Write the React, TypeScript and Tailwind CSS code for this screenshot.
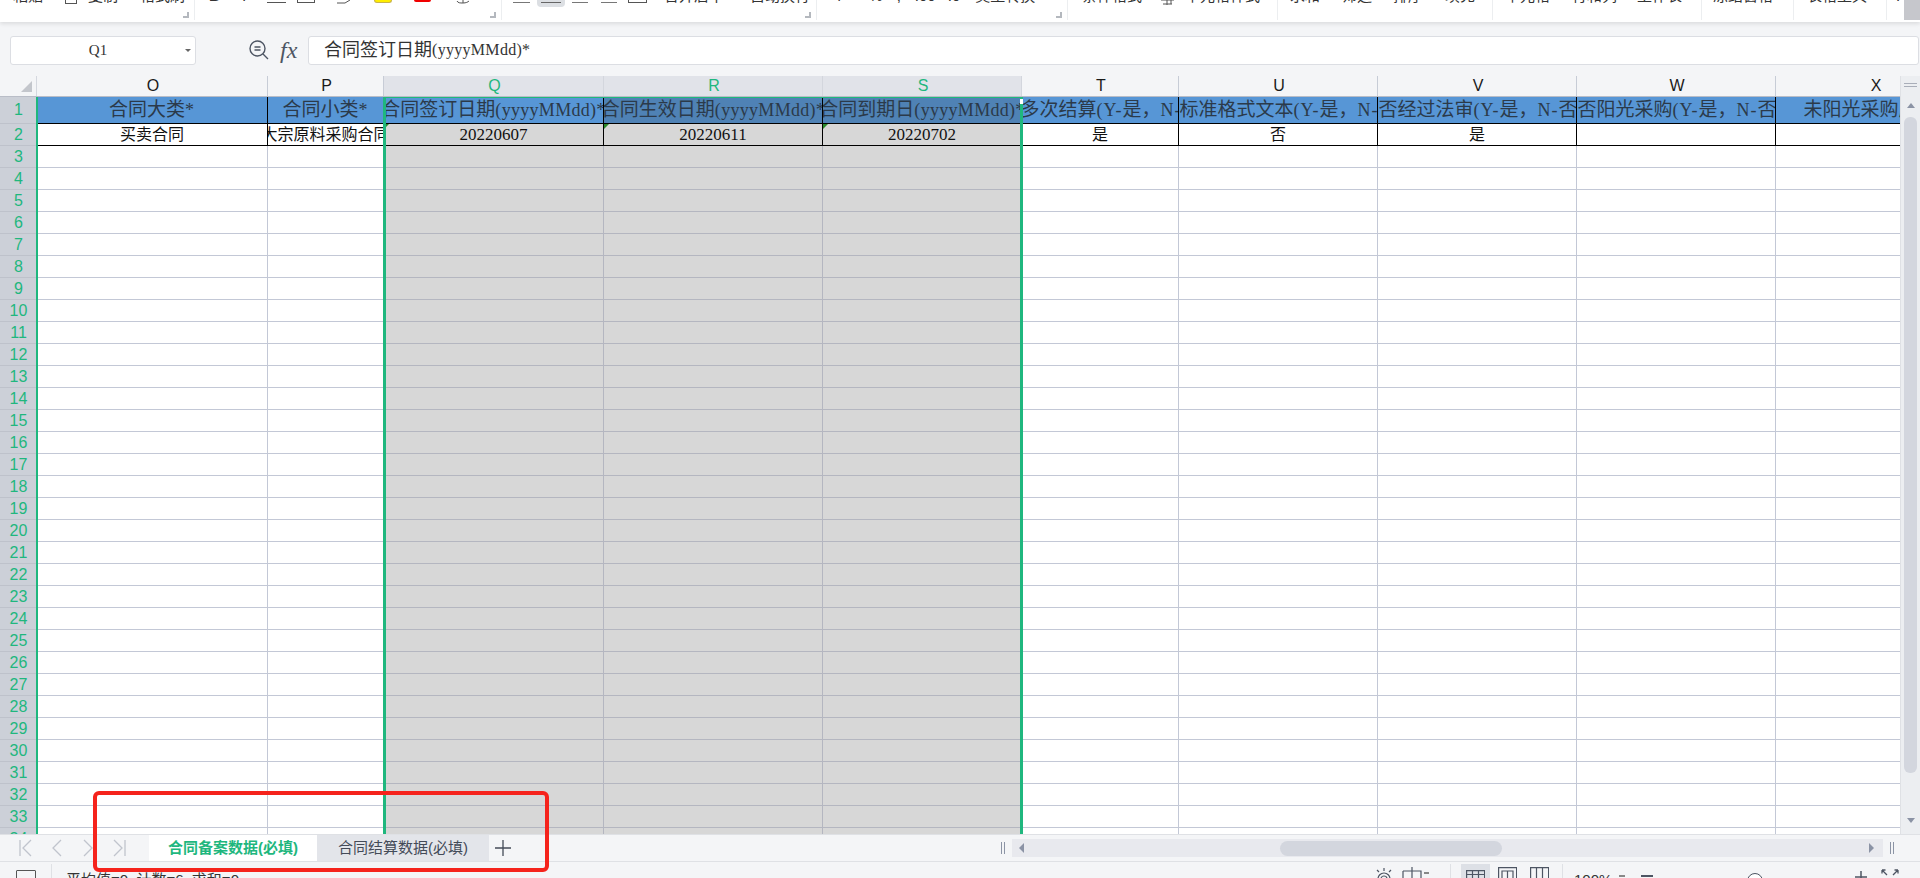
const latinFont = "font-['Liberation_Serif',serif]";

// simsun style text: ascii runs get a thin serif, close to the half width latin of the reference
const MixedText = ({ text, latinClass }: { text: string; latinClass: string }) => (
  <>
    {text.split(/([\x20-\x7e]+)/).map((part, i) =>
      /^[\x20-\x7e]+$/.test(part) ? (
        <span key={i} className={`${latinFont} ${latinClass}`}>
          {part}
        </span>
      ) : (
        <span key={i}>{part}</span>
      ),
    )}
  </>
);

const columns = [
  { id: "O", width: "w-[231px]", header: "合同大类*", value: "买卖合同" },
  { id: "P", width: "w-[116px]", header: "合同小类*", value: "大宗原料采购合同" },
  { id: "Q", width: "w-[220px]", header: "合同签订日期(yyyyMMdd)*", value: "20220607", selected: true },
  { id: "R", width: "w-[219px]", header: "合同生效日期(yyyyMMdd)*", value: "20220611", selected: true },
  { id: "S", width: "w-[199px]", header: "合同到期日(yyyyMMdd)*", value: "20220702", selected: true },
  { id: "T", width: "w-[157px]", header: "是否多次结算(Y-是，N-否)*", value: "是" },
  { id: "U", width: "w-[199px]", header: "是否标准格式文本(Y-是，N-否)*", value: "否" },
  { id: "V", width: "w-[199px]", header: "是否经过法审(Y-是，N-否)*", value: "是" },
  { id: "W", width: "w-[199px]", header: "是否阳光采购(Y-是，N-否)*", value: "" },
  { id: "X", width: "w-[199px]", header: "未阳光采购原因*", value: "" },
];

const rowNumbers = Array.from({ length: 34 }, (_, i) => i + 1);

const Launcher = () => (
  <span className="absolute right-[5px] top-[12px] w-[6px] h-[6px] border-r-2 border-b-2 border-[#b4b8be]" />
);

const Label = ({ text, className }: { text: string; className: string }) => (
  <span className={`-mt-[14px] h-[20px] leading-[20px] text-[15px] text-[#333] whitespace-nowrap ${className}`}>
    {text}
  </span>
);

const Ribbon = () => (
  <div className="relative z-10 flex h-[22px] shrink-0 overflow-hidden bg-white shadow-[0_2px_4px_rgba(0,0,0,0.1)]">
    <div className="relative flex items-start w-[195px] h-[20px] border-r border-[#eceef0]">
      <Label text="粘贴" className="ml-[13px]" />
      <span className="ml-[22px] w-[12px] h-[4px] border-x border-b border-[#555]" />
      <Label text="复制" className="ml-[11px]" />
      <Label text="格式刷" className="ml-[22px]" />
      <Launcher />
    </div>
    <div className="relative flex items-start w-[307px] h-[20px] border-r border-[#eceef0]">
      <Label text="B" className="ml-[14px] font-bold" />
      <Label text="I" className="ml-[23px] italic" />
      <span className="ml-[20px] mt-[2px] w-[19px] h-[1px] bg-[#555]" />
      <span className="ml-[11px] w-[18px] h-[3px] border-x border-b border-[#555]" />
      <svg className="ml-[21px]" width="15" height="4" viewBox="0 0 15 4">
        <path d="M1 3h8l5-3" fill="none" stroke="#555" />
      </svg>
      <span className="ml-[23px] w-[18px] h-[3px] rounded-b-sm bg-[#ffee00] border-x border-b border-[#c9b44a]" />
      <span className="ml-[22px] w-[17px] h-[2px] rounded-b-sm bg-[#f00000]" />
      <svg className="ml-[25px]" width="15" height="4" viewBox="0 0 15 4">
        <path d="M1 1c1 2 3 2 6 2s5-1 6-2M7 0v3" fill="none" stroke="#555" />
      </svg>
      <Launcher />
    </div>
    <div className="relative flex items-start w-[315px] h-[20px] border-r border-[#eceef0]">
      <span className="ml-[11px] mt-[2px] w-[17px] h-[1px] bg-[#777]" />
      <span className="flex justify-center ml-[7px] w-[28px] h-[7px] rounded-b-sm bg-[#dcdfe3]">
        <span className="mt-[2px] w-[20px] h-[1px] bg-[#666]" />
      </span>
      <span className="ml-[7px] mt-[2px] w-[16px] h-[1px] bg-[#777]" />
      <span className="ml-[13px] mt-[2px] w-[16px] h-[1px] bg-[#777]" />
      <span className="ml-[11px] w-[19px] h-[3px] border-x border-b border-[#555]" />
      <Label text="合并居中" className="ml-[17px]" />
      <Label text="自动换行" className="ml-[26px]" />
      <Launcher />
    </div>
    <div className="relative flex items-start w-[251px] h-[20px] border-r border-[#eceef0]">
      <Label text="¥" className="ml-[18px]" />
      <Label text="%" className="ml-[26px]" />
      <Label text="," className="ml-[14px]" />
      <Label text=".00" className="ml-[14px]" />
      <Label text=".0" className="ml-[12px]" />
      <Label text="类型转换" className="ml-[15px]" />
      <Launcher />
    </div>
    <div className="flex items-start w-[210px] h-[20px] border-r border-[#eceef0]">
      <Label text="条件格式" className="ml-[14px]" />
      <svg className="ml-[18px]" width="15" height="5" viewBox="0 0 15 5">
        <path d="M1 0h13M3 4h9M7 0v5M11 0v4" fill="none" stroke="#555" />
      </svg>
      <Label text="单元格样式" className="ml-[10px]" />
    </div>
    <div className="flex items-start w-[215px] h-[20px] border-r border-[#eceef0]">
      <Label text="求和" className="ml-[12px]" />
      <Label text="筛选" className="ml-[22px]" />
      <Label text="排序" className="ml-[21px]" />
      <Label text="填充" className="ml-[22px]" />
    </div>
    <div className="flex items-start w-[209px] h-[20px] border-r border-[#eceef0]">
      <Label text="单元格" className="ml-[12px]" />
      <Label text="行和列" className="ml-[22px]" />
      <Label text="工作表" className="ml-[20px]" />
    </div>
    <div className="flex items-start w-[92px] h-[20px] border-r border-[#eceef0]">
      <Label text="冻结窗格" className="ml-[11px]" />
    </div>
    <div className="flex items-start w-[93px] h-[20px] border-r border-[#eceef0]">
      <Label text="表格工具" className="ml-[13px]" />
    </div>
    <div className="flex items-start flex-1 h-[20px]">
      <Label text="!" className="ml-[9px]" />
      <span className="ml-auto w-[16px] h-[20px] bg-[#c6c7cc]" />
    </div>
  </div>
);

const FormulaBar = () => (
  <div className="flex items-center h-[54px] shrink-0 pt-[2px] pl-[10px] pr-px bg-[#f4f5f7]">
    <div className="flex items-center w-[186px] h-[29px] pr-[4px] rounded-[3px] border border-[#dcdee3] bg-white">
      <span className={`flex-1 text-center text-[15px] text-[#333] ${latinFont}`}>Q1</span>
      <span className="w-0 h-0 border-x-[3px] border-t-[3px] border-x-transparent border-t-[#666]" />
    </div>
    <svg className="ml-[52px]" width="22" height="22" viewBox="0 0 22 22" fill="none" stroke="#4d5563" strokeWidth="1.4">
      <circle cx="9.5" cy="9.5" r="7.5" />
      <path d="M15 15l5 5M6.5 8h6M6.5 11h6" />
    </svg>
    <span className="ml-[10px] w-[28px] font-['Liberation_Serif',serif] italic text-[24px] leading-none text-[#4d5563]">fx</span>
    <div className="flex items-center flex-1 h-[29px] pl-[15px] rounded-[3px] border border-[#dcdee3] bg-white text-[18px] text-[#333]">
      <MixedText text="合同签订日期(yyyyMMdd)*" latinClass="text-[16px] tracking-[0.3px]" />
    </div>
  </div>
);

const ColumnHeaders = () => (
  <div className="flex h-[21px] shrink-0 border-b border-[#b9bdc7] bg-[#f4f5f7]">
    <div className="flex shrink-0 items-end justify-end w-[37px] pr-[4px] pb-[4px] border-r border-[#d5d8df]">
      <span className="w-0 h-0 border-l-[11px] border-b-[11px] border-l-transparent border-b-[#c3c6cc]" />
    </div>
    {columns.map((col) => (
      <div
        key={col.id}
        className={`flex shrink-0 items-center justify-center pl-[2px] border-r text-[16px] ${col.width} ${
          col.selected ? "bg-[#e1e3e9] border-[#d3d6dd] text-[#1fb77e]" : "border-[#c7ccd6] text-[#1a1a1a]"
        }`}
      >
        {col.id}
      </div>
    ))}
  </div>
);

const HeaderCell = ({ col }: { col: (typeof columns)[number] }) => (
  <div
    className={`flex shrink-0 items-center justify-center overflow-hidden border-r border-b border-black text-[19px] text-[#2b3a4a] ${col.width} ${
      col.selected && col.id !== "Q" ? "bg-[#4f82b5]" : "bg-[#5796d6]"
    }`}
  >
    <span className="shrink-0 whitespace-nowrap">
      <MixedText text={col.header} latinClass={col.selected ? "text-[18px] tracking-[0.3px]" : "text-[18px] tracking-[1px]"} />
    </span>
  </div>
);

const ValueCell = ({ col }: { col: (typeof columns)[number] }) => (
  <div
    className={`relative flex shrink-0 items-center justify-center overflow-hidden border-r border-b border-black text-[16px] text-[#111] ${col.width} ${
      col.selected ? "bg-[#d7d7d7]" : "bg-white"
    }`}
  >
    <span className="shrink-0 whitespace-nowrap">
      <MixedText text={col.value} latinClass="text-[17px]" />
    </span>
    {col.selected && (
      <span className="absolute top-0 left-0 w-0 h-0 border-t-[5px] border-r-[5px] border-t-[#2a8a2a] border-r-transparent" />
    )}
  </div>
);

const Rows = () => (
  <div className="relative flex-1 overflow-hidden">
    {rowNumbers.map((n) => (
      <div key={n} className={`flex ${n === 1 ? "h-[27px]" : "h-[22px]"}`}>
        <div className="flex shrink-0 items-center justify-center w-[37px] border-b border-[#bec2cb] bg-[#ccd0d8] text-[16px] text-[#1fb77e]">
          {n}
        </div>
        {columns.map((col) =>
          n === 1 ? (
            <HeaderCell key={col.id} col={col} />
          ) : n === 2 ? (
            <ValueCell key={col.id} col={col} />
          ) : (
            <div
              key={col.id}
              className={`shrink-0 border-r border-b ${col.width} ${
                col.selected ? "bg-[#d7d7d7] border-[#b4b6c0]" : "bg-white border-[#c3c8d6]"
              }`}
            />
          ),
        )}
      </div>
    ))}
    {/* selection outline and the green edge beside the row numbers */}
    <div className="absolute top-[-1px] bottom-0 left-[383px] w-[640px] border-x-[3px] border-t-[2px] border-[#1fb77e]" />
    <div className="absolute top-0 bottom-0 left-[36px] w-[2px] bg-[#1fb77e]" />
    <div className="absolute top-[2px] left-[1020px] w-[3px] h-[5px] bg-white" />
  </div>
);

const VerticalScrollbar = () => (
  <div className="flex flex-col items-center w-[20px] shrink-0 bg-[#eceef1] border-l border-[#dfe1e5]">
    <span className="mt-[7px] w-[13px] h-[4px] border-y border-[#a9aeb9]" />
    <span className="mt-[16px] w-0 h-0 border-x-[4px] border-b-[5px] border-x-transparent border-b-[#8b93a5]" />
    <span className="mt-[9px] w-[13px] h-[656px] rounded-md bg-[#d3d6de]" />
    <span className="mt-[45px] w-0 h-0 border-x-[4px] border-t-[5px] border-x-transparent border-t-[#8b93a5]" />
  </div>
);

const NavIcon = ({ d }: { d: string }) => (
  <svg width="16" height="18" viewBox="0 0 16 18" fill="none" stroke="#c0c4cd" strokeWidth="1.3">
    <path d={d} />
  </svg>
);

const TabBar = () => (
  <div className="flex items-stretch h-[28px] shrink-0 border-y border-[#dfe1e5] bg-[#f4f5f7] text-[15px]">
    <div className="flex items-center w-[149px] pl-[18px] gap-[15px]">
      <NavIcon d="M2 1v16M13 1l-8 8 8 8" />
      <NavIcon d="M12 1L4 9l8 8" />
      <NavIcon d="M4 1l8 8-8 8" />
      <NavIcon d="M3 1l8 8-8 8M14 1v16" />
    </div>
    <div className="flex items-center justify-center w-[168px] bg-white font-bold text-[#1fb77e]">合同备案数据(必填)</div>
    <div className="flex items-center justify-center w-[172px] bg-[#e3e5ea] text-[#444b58]">合同结算数据(必填)</div>
    <svg className="ml-[6px] self-center" width="16" height="16" viewBox="0 0 16 16" stroke="#444b58" strokeWidth="1.3">
      <path d="M8 0v16M0 8h16" />
    </svg>
    <span className="ml-[490px] self-center w-[4px] h-[12px] border-x border-[#8c94a5]" />
    <div className="flex items-center ml-[7px] mt-[4px] mb-[4px] w-[871px] bg-[#e8e9ee]">
      <span className="ml-[7px] w-0 h-0 border-y-[5px] border-r-[5px] border-y-transparent border-r-[#8b93a5]" />
      <span className="ml-[256px] w-[222px] h-[15px] rounded-lg bg-[#d3d6de]" />
      <span className="ml-auto mr-[9px] w-0 h-0 border-y-[5px] border-l-[5px] border-y-transparent border-l-[#8b93a5]" />
    </div>
    <span className="ml-[7px] self-center w-[4px] h-[12px] border-x border-[#8c94a5]" />
  </div>
);

const StatusBar = () => (
  <div className="flex flex-1 items-start overflow-hidden bg-[#f4f5f7] text-[15px] text-[#333]">
    <span className="ml-[16px] mt-[8px] w-[20px] h-[12px] border border-[#555] rounded-t-[1px]" />
    <span className="ml-[15px] mt-[2px] w-px h-[15px] bg-[#dfe1e5]" />
    <span className="ml-[14px] mt-[8px] leading-[20px] whitespace-nowrap">平均值=0&nbsp;&nbsp;计数=6&nbsp;&nbsp;求和=0</span>
    <svg className="ml-[1135px] mt-[6px]" width="20" height="11" viewBox="0 0 20 11" fill="none" stroke="#4d5563" strokeWidth="1.2">
      <circle cx="10" cy="11" r="6" />
      <circle cx="10" cy="11" r="3" />
      <path d="M10 0v3M3 2l2 2M17 2l-2 2" />
    </svg>
    <svg className="ml-[8px] mt-[5px]" width="20" height="12" viewBox="0 0 20 12" fill="none" stroke="#4d5563" strokeWidth="1.2">
      <path d="M10 0v12M1 4h18v8M1 4v8" />
    </svg>
    <span className="ml-[2px] mt-[10px] w-[5px] h-[1.5px] bg-[#888]" />
    <span className="ml-[21px] mt-[2px] w-px h-[15px] bg-[#dfe1e5]" />
    <div className="flex justify-center ml-[10px] mt-[2px] w-[29px] h-[15px] bg-[#dde0e6]">
      <svg className="mt-[6px]" width="19" height="9" viewBox="0 0 19 9" fill="none" stroke="#4d5563" strokeWidth="1.2">
        <path d="M.6 9V.6h18V9M.6 4.5h18M6.5.6V9M12.5.6V9" />
      </svg>
    </div>
    <svg className="ml-[8px] mt-[5px]" width="19" height="12" viewBox="0 0 19 12" fill="none" stroke="#4d5563" strokeWidth="1.2">
      <path d="M.6 12V.6h18V12M4 12V4h11v8M9.5 4v8" />
    </svg>
    <svg className="ml-[13px] mt-[5px]" width="19" height="12" viewBox="0 0 19 12" fill="none" stroke="#4d5563" strokeWidth="1.2">
      <path d="M.6 12V.6h18V12M6.5.6V12M12.5.6V12" />
    </svg>
    <span className="ml-[13px] mt-[2px] w-px h-[15px] bg-[#dfe1e5]" />
    <span className="ml-[11px] mt-[8px] leading-[20px]">100%</span>
    <span className="ml-[7px] mt-[13px] w-[6px] h-[1.5px] bg-[#888]" />
    <span className="ml-[16px] mt-[13px] w-[12px] h-[2px] bg-[#4d5563]" />
    <span className="ml-[94px] mt-[11px] w-[16px] h-[16px] rounded-full border border-[#4d5563] bg-white" />
    <svg className="ml-[92px] mt-[9px]" width="12" height="12" viewBox="0 0 12 12" stroke="#4d5563" strokeWidth="1.5">
      <path d="M6 0v12M0 6h12" />
    </svg>
    <svg className="ml-[14px] mt-[7px]" width="18" height="8" viewBox="0 0 18 8" fill="none" stroke="#4d5563" strokeWidth="1.3">
      <path d="M1 1l5 5M1 1h3.5M1 1v3.5M17 1l-5 5M17 1h-3.5M17 1v3.5" />
    </svg>
  </div>
);

export default function App() {
  return (
    <div className="relative flex flex-col w-[1920px] h-[878px] overflow-hidden bg-[#f4f5f7] font-['Liberation_Sans','Noto_Sans_CJK_SC',sans-serif]">
      <Ribbon />
      <FormulaBar />
      <div className="flex h-[758px] shrink-0">
        <div className="flex flex-col w-[1900px] overflow-hidden">
          <ColumnHeaders />
          <Rows />
        </div>
        <VerticalScrollbar />
      </div>
      <TabBar />
      <StatusBar />
      {/* red annotation drawn over the screenshot */}
      <div className="absolute left-[93px] top-[791px] w-[456px] h-[81px] rounded-[6px] border-4 border-[#f5231c]" />
    </div>
  );
}
